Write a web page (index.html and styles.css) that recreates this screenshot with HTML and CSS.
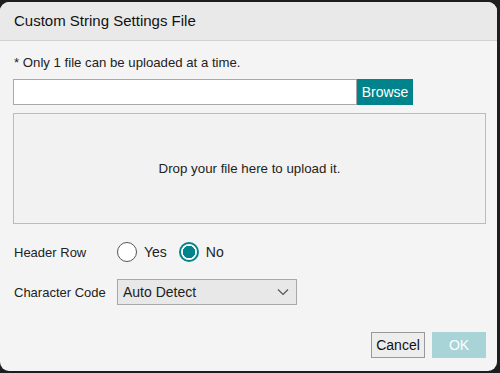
FILE: index.html
```html
<!DOCTYPE html>
<html lang="en">
<head>
    <meta charset="UTF-8">
    <title>Custom String Settings File</title>
    <link rel="stylesheet" href="styles.css">
</head>
<body>
    <div class="dialog">
        <div class="dialog-header">Custom String Settings File</div>
        <div class="dialog-body">
            <p class="note">* Only 1 file can be uploaded at a time.</p>
            <div class="file-row">
                <input type="text" class="file-input">
                <button class="browse-btn">Browse</button>
            </div>
            <div class="drop-zone">Drop your file here to upload it.</div>

            <div class="field-row">
                <span class="field-label">Header Row</span>
                <label class="radio"><span class="radio-dot"></span>Yes</label>
                <label class="radio checked"><span class="radio-dot"></span>No</label>
            </div>
            <div class="field-row code-row">
                <span class="field-label">Character Code</span>
                <div class="select">
                    <span>Auto Detect</span>
                    <svg width="12" height="8" viewBox="0 0 12 8"><path d="M1 1.5 L6 6.5 L11 1.5" fill="none" stroke="#555" stroke-width="1.2"/></svg>
                </div>
            </div>
        </div>
        <div class="dialog-footer">
            <button class="cancel-btn">Cancel</button>
            <button class="ok-btn">OK</button>
        </div>
    </div>
</body>
</html>
```

FILE: styles.css
```css
* {
    margin: 0;
    padding: 0;
    box-sizing: border-box;
}

html, body {
    height: 100%;
}

body {
    font-family: "Liberation Sans", Arial, sans-serif;
    background-color: #1e1e1e;
    padding: 2px 3px 2px 0;
    color: #222;
}

.dialog {
    height: 100%;
    background-color: #f4f4f4;
    border-radius: 9px;
    overflow: hidden;
    display: flex;
    flex-direction: column;
}

.dialog-header {
    height: 39px;
    background-color: #e9e9e9;
    border-bottom: 1px solid #d0d0d0;
    padding: 0 14px;
    font-size: 15px;
    line-height: 38px;
    color: #111;
}

.dialog-body {
    flex-grow: 1;
    padding: 14px 11px 0 13px;
}

.note {
    font-size: 13.2px;
    padding-left: 1px;
    margin-bottom: 9px;
}

.file-row {
    display: flex;
    margin-bottom: 8px;
}

.file-input {
    width: 344px;
    height: 26px;
    border: 1px solid #a8a8a8;
    background-color: #fff;
}

.browse-btn {
    width: 56px;
    height: 26px;
    background-color: #00838a;
    color: #fff;
    border: none;
    font-family: inherit;
    font-size: 14px;
}

.drop-zone {
    height: 111px;
    border: 1px solid #bcbcbc;
    background-color: #f2f2f2;
    display: flex;
    align-items: center;
    justify-content: center;
    font-size: 13.3px;
    margin-bottom: 17px;
}

.field-row {
    display: flex;
    align-items: center;
    font-size: 13px;
    height: 22px;
}

.field-label {
    width: 104px;
    padding-left: 1px;
}

.radio {
    display: flex;
    align-items: center;
    font-size: 14px;
    margin-right: 12px;
}

.radio-dot {
    width: 20px;
    height: 20px;
    border: 1px solid #555;
    border-radius: 50%;
    margin-right: 7px;
    background-color: #fff;
}

.radio.checked .radio-dot {
    border: 2px solid #00838a;
    background: radial-gradient(circle, #00838a 0 6px, #fff 6.5px);
}

.code-row {
    margin-top: 16px;
    height: 26px;
}

.select {
    width: 180px;
    height: 26px;
    border: 1px solid #a8a8a8;
    background-color: #e8e8e8;
    display: flex;
    align-items: center;
    justify-content: space-between;
    padding: 0 7px 0 5px;
    font-size: 14px;
}

.dialog-footer {
    display: flex;
    justify-content: flex-end;
    gap: 7px;
    padding: 0 11px 13px 0;
}

.cancel-btn, .ok-btn {
    width: 54px;
    height: 26px;
    font-family: inherit;
    font-size: 14px;
}

.cancel-btn {
    background-color: #ededed;
    border: 1px solid #999;
    color: #111;
}

.ok-btn {
    background-color: #a8d4d7;
    border: none;
    color: #fff;
}
```
